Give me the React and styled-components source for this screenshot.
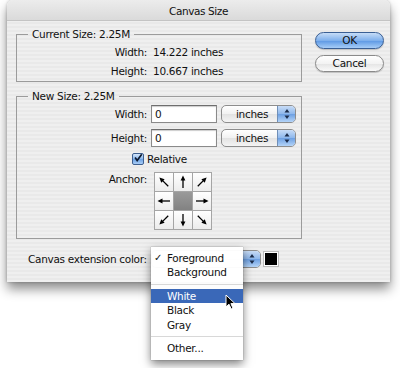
import React from "react";
import styled, { createGlobalStyle } from "styled-components";

const GlobalStyle = createGlobalStyle`
  html, body {
    margin: 0;
    padding: 0;
    background: #ffffff;
  }
  body {
    font-family: "DejaVu Sans", "Liberation Sans", sans-serif;
    font-size: 10.5px;
    letter-spacing: -0.3px;
    color: #111;
  }
`;

const anchors = [315, 0, 45, 270, null, 90, 225, 180, 135];

const menuItems = [
  { label: "Foreground", checked: true },
  { label: "Background" },
  { sep: true },
  { label: "White", active: true },
  { label: "Black" },
  { label: "Gray" },
  { sep: true },
  { label: "Other..." },
];

function Arrow({ angle }) {
  return (
    <svg width="18" height="18" viewBox="0 0 18 18">
      <g transform={`rotate(${angle} 9 9)`}>
        <line x1="9" y1="15" x2="9" y2="6" stroke="#000" strokeWidth="1.3" />
        <polygon points="9,2.5 6.6,7.5 11.4,7.5" fill="#000" />
      </g>
    </svg>
  );
}

function Cursor() {
  return (
    <svg width="12" height="17" viewBox="0 0 12 17">
      <path
        d="M1 1 L1 13 L4 10.2 L6.2 15 L8 14.2 L5.9 9.6 L10 9.6 Z"
        fill="#000"
        stroke="#fff"
        strokeWidth="1"
        strokeLinejoin="round"
      />
    </svg>
  );
}

function SelectArrows() {
  return (
    <svg width="8" height="12" viewBox="0 0 8 12">
      <polygon points="4,1 1.5,4.5 6.5,4.5" fill="#1b2c4a" />
      <polygon points="4,11 1.5,7.5 6.5,7.5" fill="#1b2c4a" />
    </svg>
  );
}

function App() {
  return (
    <>
      <GlobalStyle />
      <Page>
        <Window>
          <TitleBar>Canvas Size</TitleBar>
          <Content>
            <Groups>
              <Group>
                <Legend>Current Size: 2.25M</Legend>
                <InfoGrid>
                  <Label>Width:</Label>
                  <span>14.222 inches</span>
                  <Label>Height:</Label>
                  <span>10.667 inches</span>
                </InfoGrid>
              </Group>
              <Group $bottom={8}>
                <Legend>New Size: 2.25M</Legend>
                <FieldGrid>
                  <Label>Width:</Label>
                  <TextInput>0</TextInput>
                  <Popup $width={75}>
                    <span>inches</span>
                    <PopupArrow>
                      <SelectArrows />
                    </PopupArrow>
                  </Popup>
                  <Label>Height:</Label>
                  <TextInput>0</TextInput>
                  <Popup $width={75}>
                    <span>inches</span>
                    <PopupArrow>
                      <SelectArrows />
                    </PopupArrow>
                  </Popup>
                </FieldGrid>
                <CheckRow>
                  <CheckBox>
                    <svg width="12" height="12" viewBox="0 0 12 12">
                      <path
                        d="M2.5 5.5 L5 9 L10.5 1.5"
                        fill="none"
                        stroke="#0d1a30"
                        strokeWidth="2"
                      />
                    </svg>
                  </CheckBox>
                  Relative
                </CheckRow>
                <AnchorRow>
                  <Label>Anchor:</Label>
                  <AnchorGrid>
                    {anchors.map((a, i) => (
                      <AnchorCell key={i} $center={a === null}>
                        {a !== null && <Arrow angle={a} />}
                      </AnchorCell>
                    ))}
                  </AnchorGrid>
                </AnchorRow>
              </Group>
            </Groups>
            <Buttons>
              <Button $default>OK</Button>
              <Button>Cancel</Button>
            </Buttons>
          </Content>
          <ColorRow>
            <ColorLabel>Canvas extension color:</ColorLabel>
            <ColorSelect>
              <Popup $width={110}>
                <span>Foreground</span>
                <PopupArrow>
                  <SelectArrows />
                </PopupArrow>
              </Popup>
              <Menu>
                {menuItems.map((m, i) =>
                  m.sep ? (
                    <Separator key={i} />
                  ) : (
                    <MenuItem key={i} $active={m.active}>
                      <Check>{m.checked ? "✓" : ""}</Check>
                      {m.label}
                    </MenuItem>
                  )
                )}
                <CursorSpot>
                  <Cursor />
                </CursorSpot>
              </Menu>
            </ColorSelect>
            <Swatch />
          </ColorRow>
        </Window>
      </Page>
    </>
  );
}

const Page = styled.div`
  width: 400px;
  height: 368px;
  padding: 0 10px 0 7px;
  box-sizing: border-box;
`;

const Window = styled.div`
  width: 383px;
  height: 282px;
  border-radius: 6px 6px 0 0;
  background: repeating-linear-gradient(
    to bottom,
    #efefef 0px,
    #efefef 2px,
    #e9e9e9 2px,
    #e9e9e9 4px
  );
  box-shadow: 0 7px 12px rgba(0, 0, 0, 0.45), 0 0 3px rgba(0, 0, 0, 0.25);
  display: flex;
  flex-direction: column;
`;

const TitleBar = styled.div`
  height: 21px;
  line-height: 22px;
  text-align: center;
  font-size: 10.5px;
  letter-spacing: -0.4px;
  border-radius: 6px 6px 0 0;
  background: linear-gradient(to bottom, #ececec, #dadada);
  border-bottom: 1px solid #c4c4c4;
  box-sizing: border-box;
`;

const Content = styled.div`
  display: flex;
  padding: 6px 6px 0 9px;
  gap: 13px;
`;

const Groups = styled.div`
  display: flex;
  flex-direction: column;
  gap: 7px;
`;

const Group = styled.fieldset`
  width: 286px;
  box-sizing: border-box;
  margin: 0;
  padding: 0 0 ${(p) => p.$bottom || 1}px 0;
  border: 1px solid #9b9b9b;
  border-radius: 0;
`;

const Legend = styled.legend`
  margin-left: 11px;
  padding: 0 4px;
  line-height: 14px;
`;

const Label = styled.span`
  text-align: right;
`;

const InfoGrid = styled.div`
  display: grid;
  grid-template-columns: 130px auto;
  column-gap: 6px;
  grid-auto-rows: 19px;
  align-items: center;
  padding-top: 1px;
`;

const FieldGrid = styled.div`
  display: grid;
  grid-template-columns: 130px 66px 75px;
  column-gap: 4px;
  row-gap: 6px;
  grid-auto-rows: 18px;
  align-items: center;
  padding-top: 2px;
`;

const TextInput = styled.div`
  height: 18px;
  box-sizing: border-box;
  border: 1px solid #8a8a8a;
  border-top-color: #6e6e6e;
  background: #fff;
  box-shadow: inset 0 1px 1px rgba(0, 0, 0, 0.2);
  padding-left: 3px;
  line-height: 16px;
`;

const Popup = styled.div`
  width: ${(p) => p.$width}px;
  height: 18px;
  box-sizing: border-box;
  display: flex;
  align-items: stretch;
  border: 1px solid #8d8d8d;
  border-radius: 5px;
  background: linear-gradient(to bottom, #ffffff, #f1f1f1 50%, #e2e2e2 51%, #f4f4f4);
  overflow: hidden;
  span {
    flex: 1;
    padding-left: 14px;
    line-height: 16px;
  }
`;

const PopupArrow = styled.div`
  width: 17px;
  display: flex;
  align-items: center;
  justify-content: center;
  border-left: 1px solid #6f8fb8;
  background: linear-gradient(to bottom, #c8dcf6, #8db7ec 50%, #6c9fe2 51%, #b4d4f8);
`;

const CheckRow = styled.div`
  display: flex;
  align-items: center;
  gap: 3px;
  margin: 5px 0 0 115px;
  height: 14px;
`;

const CheckBox = styled.div`
  width: 12px;
  height: 12px;
  box-sizing: border-box;
  border: 1px solid #3d5f8f;
  border-radius: 2px;
  background: linear-gradient(to bottom, #d4e6fb, #89b6ec 50%, #6aa0e3 51%, #a9cdf6);
  display: flex;
  svg {
    margin: -2px 0 0 0;
  }
`;

const AnchorRow = styled.div`
  display: grid;
  grid-template-columns: 130px 56px;
  column-gap: 8px;
  margin-top: 6px;
  ${Label} {
    line-height: 14px;
  }
`;

const AnchorGrid = styled.div`
  display: grid;
  grid-template-columns: repeat(3, 18px);
  grid-template-rows: repeat(3, 18px);
  gap: 1px;
  width: 56px;
  background: #a5a5a5;
  border: 1px solid #a5a5a5;
  margin-left: -1px;
`;

const AnchorCell = styled.div`
  display: flex;
  align-items: center;
  justify-content: center;
  background: ${(p) =>
    p.$center
      ? "linear-gradient(to bottom, #9a9a9a, #828282)"
      : "linear-gradient(to bottom, #ffffff, #ececec)"};
`;

const Buttons = styled.div`
  display: flex;
  flex-direction: column;
  gap: 6px;
  padding-top: 5px;
`;

const Button = styled.div`
  width: 69px;
  height: 17px;
  box-sizing: border-box;
  border-radius: 9px;
  text-align: center;
  line-height: 15px;
  border: 1px solid ${(p) => (p.$default ? "#3a5f94" : "#8a8a8a")};
  background: ${(p) =>
    p.$default
      ? "linear-gradient(to bottom, #c6dcf7, #7fb0ec 50%, #5b97e4 51%, #a7cdf7)"
      : "linear-gradient(to bottom, #ffffff, #f3f3f3 50%, #e4e4e4 51%, #fafafa)"};
  box-shadow: 0 1px 1px rgba(0, 0, 0, 0.2);
`;

const ColorRow = styled.div`
  display: flex;
  align-items: center;
  margin-top: 11px;
  padding-left: 21px;
  height: 17px;
`;

const ColorLabel = styled.span`
  width: 123px;
  white-space: nowrap;
`;

const ColorSelect = styled.div`
  position: relative;
`;

const Swatch = styled.div`
  width: 12px;
  height: 12px;
  background: #000;
  border: 1px solid #fff;
  box-shadow: 0 0 0 1px #bbb;
  margin-left: 3px;
`;

const Menu = styled.div`
  position: absolute;
  left: 0;
  top: -3px;
  width: 92px;
  padding: 4px 0 4px;
  background: rgba(255, 255, 255, 0.97);
  box-shadow: 0 4px 9px rgba(0, 0, 0, 0.5), 0 0 1px rgba(0, 0, 0, 0.4);
  display: flex;
  flex-direction: column;
`;

const MenuItem = styled.div`
  height: 14.5px;
  line-height: 14.5px;
  display: flex;
  color: ${(p) => (p.$active ? "#fff" : "#111")};
  background: ${(p) => (p.$active ? "#3a68b8" : "transparent")};
`;

const Check = styled.span`
  width: 16px;
  padding-left: 3px;
  box-sizing: border-box;
  font-size: 10px;
`;

const Separator = styled.div`
  height: 9px;
  display: flex;
  align-items: center;
  &::after {
    content: "";
    flex: 1;
    height: 1px;
    background: #d8d8d8;
  }
`;

const CursorSpot = styled.div`
  position: absolute;
  left: 74px;
  top: 47px;
  line-height: 0;
`;

export default App;
